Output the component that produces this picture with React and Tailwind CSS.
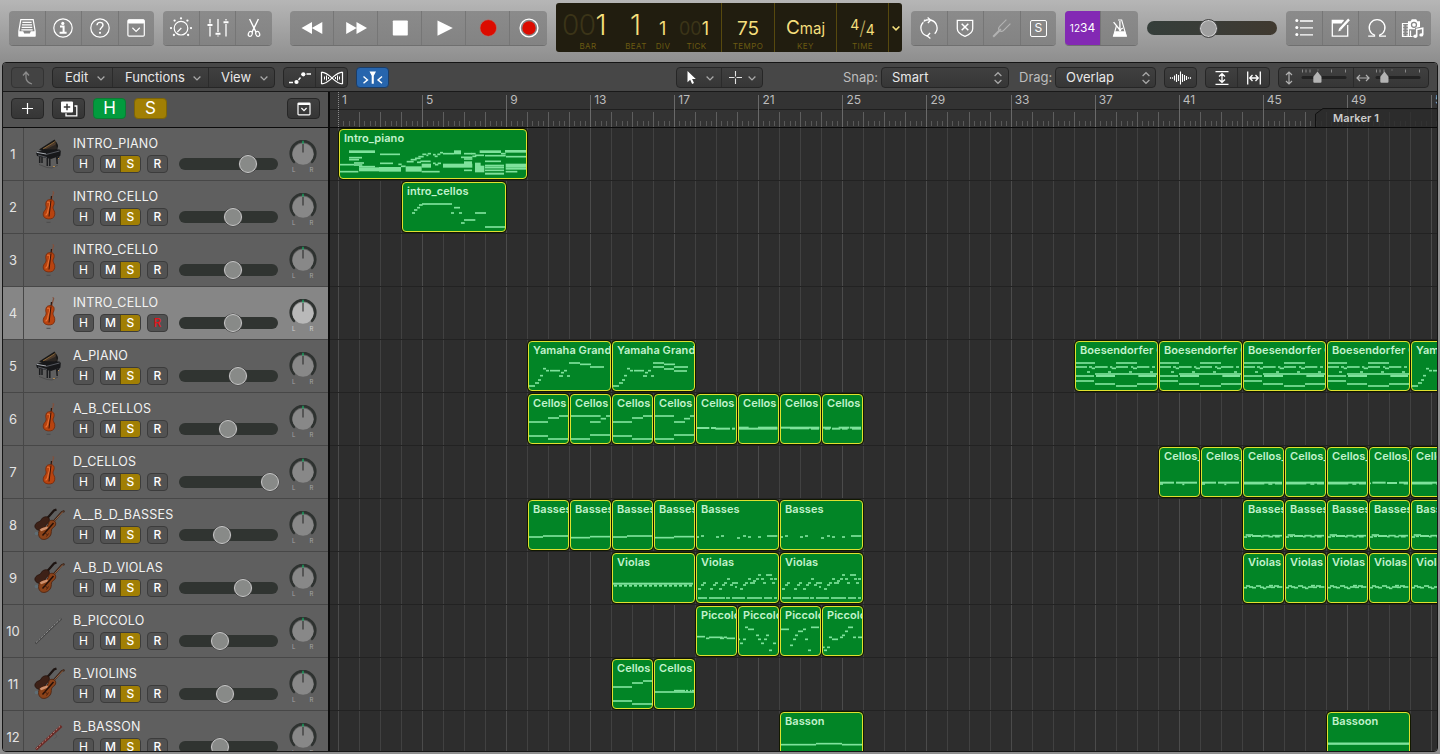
import React from "react";

const BAR = 21.02;
const barX = (b) => Math.round(8.9 + BAR * (b - 1));

/* ---------- note patterns: [x1, x2, y, h?] in thirds of a pixel ---------- */
const INTRO_PIANO = [
  [30, 108, 68, 8], [123, 183, 76], [30, 69, 86], [30, 60, 92], [2, 45, 107], [45, 75, 102], [45, 70, 108], [60, 108, 113],
  [60, 120, 121, 12], [120, 186, 121, 14], [2, 58, 128], [123, 162, 103], [178, 188, 106], [186, 200, 112], [200, 248, 120, 16], [203, 224, 98],
  [215, 233, 92], [228, 245, 88], [238, 254, 83], [250, 262, 76], [262, 268, 79], [266, 276, 74], [282, 290, 77], [287, 296, 82],
  [295, 304, 76], [303, 312, 71], [312, 345, 74], [345, 366, 70, 12], [375, 398, 74], [396, 410, 74], [234, 246, 100], [244, 275, 97],
  [248, 276, 110, 12], [282, 290, 103], [288, 298, 107], [296, 306, 103], [312, 400, 110, 12], [248, 302, 128], [366, 400, 85], [375, 400, 90],
  [375, 399, 104, 14], [375, 399, 124], [400, 412, 82], [408, 435, 79], [422, 486, 68, 8], [438, 500, 80], [408, 425, 106, 10], [408, 436, 120, 20],
  [486, 500, 74], [498, 562, 67, 8], [501, 562, 83], [438, 486, 97], [438, 495, 110, 6], [438, 495, 116], [438, 495, 124], [438, 495, 134, 6],
  [500, 562, 110, 12], [500, 562, 119, 6], [500, 535, 128],
];
const INTRO_CELLOS = [
  [30, 39, 93], [36, 46, 84], [45, 54, 77], [51, 62, 69], [60, 150, 66], [156, 174, 77], [147, 156, 93], [171, 180, 93],
  [219, 252, 93], [186, 220, 114], [177, 188, 123], [249, 309, 135],
];
const YAM_BASE = [
  [2, 21, 135], [21, 33, 126], [30, 39, 117], [36, 45, 104], [45, 54, 83], [54, 63, 89], [66, 96, 89], [99, 108, 95],
  [108, 117, 89], [93, 105, 105], [117, 126, 105], [123, 156, 66], [156, 189, 70], [186, 228, 78],
];
const YAM_2 = [...YAM_BASE, [123, 156, 78], [156, 186, 84], [186, 225, 90]];
const CEL_A = [[2, 60, 84], [60, 93, 72], [93, 122, 66], [2, 60, 126], [60, 122, 135]];
const CEL_B = [[1, 92, 66], [92, 108, 74], [108, 122, 66], [60, 92, 84], [1, 60, 135], [60, 122, 123]];
const CEL_D = [[1, 60, 66], [60, 93, 84], [90, 108, 74], [108, 122, 66], [1, 60, 135], [60, 122, 123]];
const CEL_E = [[2, 40, 102, 6], [45, 60, 102, 6], [58, 102, 104, 6], [108, 117, 104, 6]];
const CEL_F = [[1, 32, 101, 6], [1, 118, 104, 6], [60, 118, 101, 6]];
const CEL_G = [[2, 60, 101, 6], [30, 87, 103, 6], [60, 118, 101, 6], [93, 117, 104, 6]];
const CEL_H = [[1, 27, 101, 6], [8, 24, 104, 6], [30, 55, 104, 6], [50, 82, 101, 6], [60, 77, 104, 6], [84, 117, 101, 6], [90, 117, 104, 6]];
const BAS_A = [[2, 45, 111], [45, 122, 108]];
const BAS_B = [[2, 60, 113], [60, 122, 110]];
const BAS_LONG = [
  [2, 9, 111], [15, 24, 108], [60, 69, 111], [75, 84, 108], [123, 132, 114], [141, 150, 108], [156, 165, 111], [186, 195, 111], [213, 244, 108],
];
const VIO_TREM = [[3, 243, 92, 6], ...Array.from({ length: 16 }, (_, i) => [6 + i * 15, 15 + i * 15, 98, 6])];
const VIO_RUN = [
  [6, 15, 108], [15, 24, 96], [21, 30, 90], [42, 51, 108], [51, 60, 96], [57, 66, 90], [69, 78, 108], [78, 87, 96], [84, 93, 90],
  [93, 102, 78], [102, 111, 96], [108, 126, 90], [117, 123, 102], [132, 141, 108], [141, 150, 96], [147, 156, 90],
  [156, 165, 78], [162, 177, 90], [171, 180, 84], [180, 189, 78], [186, 195, 66], [195, 204, 78], [201, 210, 90], [210, 228, 66],
  [222, 231, 78], [228, 237, 90], [234, 243, 78],
  [6, 33, 135], [39, 87, 135], [90, 102, 135], [108, 147, 135], [153, 198, 135], [204, 228, 135], [234, 243, 135],
];
const PIC_1 = [[2, 27, 92], [30, 40, 97], [39, 80, 94], [72, 84, 97], [83, 93, 94], [92, 117, 97]];
const PIC_2 = [
  [1, 6, 100], [6, 15, 112], [15, 24, 100], [21, 30, 64], [30, 48, 70], [54, 63, 88], [60, 69, 100], [69, 78, 112],
  [78, 87, 100], [84, 93, 88], [93, 102, 133], [105, 114, 112],
];
const PIC_3 = [[2, 27, 70], [30, 39, 118], [39, 48, 100], [45, 54, 88], [54, 69, 76], [69, 78, 70], [75, 84, 100], [84, 93, 133], [93, 117, 64]];
const PIC_4 = [
  [2, 8, 124], [6, 15, 133], [15, 24, 124], [21, 30, 94], [30, 48, 100], [54, 63, 94], [60, 69, 88], [69, 78, 76], [78, 93, 64], [93, 102, 94], [108, 120, 94],
];
const CEL_LOW = [[2, 122, 99], [60, 93, 95], [96, 102, 95], [108, 112, 95], [114, 122, 95]];
const BASSON = [[2, 108, 98], [108, 186, 95], [186, 246, 98]];
const BASSOON_R = [[2, 246, 95, 7]];
const BOES = [
  [3, 60, 66], [3, 36, 78], [42, 51, 78], [50, 60, 82], [60, 98, 78], [105, 112, 78], [110, 123, 82], [123, 186, 66], [123, 159, 78],
  [168, 175, 78], [174, 186, 82], [186, 223, 78], [231, 240, 78], [36, 45, 93], [99, 108, 93], [162, 171, 93], [225, 234, 93],
  [3, 57, 105], [60, 123, 99], [63, 120, 105, 6], [123, 186, 99], [186, 246, 99], [190, 243, 105, 6],
  [3, 57, 120], [60, 120, 129], [123, 186, 135], [186, 246, 129],
];
const CEL_R1 = [[3, 45, 107, 6], [51, 114, 107, 6], [3, 12, 111], [70, 76, 112]];
const CEL_R2 = [[2, 117, 107, 6], [2, 64, 110], [76, 88, 111], [96, 117, 110]];
const CEL_R3 = [[2, 6, 109], [10, 50, 107, 6], [54, 84, 108, 6], [90, 117, 107, 6], [104, 117, 110]];
const BAS_R = [
  [2, 12, 111], [8, 30, 105], [14, 24, 109], [27, 54, 108, 6], [54, 62, 110], [58, 80, 107], [76, 90, 110], [88, 117, 107], [96, 110, 110],
];
const VIO_R = [
  [2, 12, 104], [9, 21, 99], [18, 30, 102], [27, 39, 104], [39, 54, 99], [51, 63, 103], [60, 70, 106], [69, 84, 102], [78, 90, 98],
  [84, 96, 103], [93, 108, 99], [102, 118, 102],
];

const TRACKS = [
  { name: "INTRO_PIANO", icon: "piano", vol: 69, regions: [[1, 9, "Intro_piano", INTRO_PIANO]] },
  { name: "INTRO_CELLO", icon: "cello", vol: 54, regions: [[4, 5, "intro_cellos", INTRO_CELLOS]] },
  { name: "INTRO_CELLO", icon: "cello", vol: 54, regions: [] },
  { name: "INTRO_CELLO", icon: "cello", vol: 54, selected: true, regions: [] },
  {
    name: "A_PIANO", icon: "piano", vol: 59,
    regions: [
      [10, 4, "Yamaha Grand", YAM_BASE], [14, 4, "Yamaha Grand", YAM_2],
      [36, 4, "Boesendorfer G", BOES], [40, 4, "Boesendorfer G", BOES], [44, 4, "Boesendorfer G", BOES],
      [48, 4, "Boesendorfer G", BOES], [52, 4, "Yamaha Grand", YAM_BASE],
    ],
  },
  {
    name: "A_B_CELLOS", icon: "cello", vol: 49,
    regions: [CEL_A, CEL_B, CEL_A, CEL_D, CEL_E, CEL_F, CEL_G, CEL_H].map((n, i) => [10 + i * 2, 2, "Cellos", n]),
  },
  {
    name: "D_CELLOS", icon: "cello", vol: 91,
    regions: [CEL_R1, CEL_R1, CEL_R2, CEL_R2, CEL_R2, CEL_R3, CEL_R2].map((n, i) => [40 + i * 2, 2, "Cellos_", n]),
  },
  {
    name: "A__B_D_BASSES", icon: "violins", vol: 43,
    regions: [
      [10, 2, "Basses", BAS_A], [12, 2, "Basses", BAS_B], [14, 2, "Basses", BAS_A], [16, 2, "Basses", BAS_B],
      [18, 4, "Basses", BAS_LONG], [22, 4, "Basses", BAS_LONG],
      ...[44, 46, 48, 50, 52].map((b) => [b, 2, "Basses", BAS_R]),
    ],
  },
  {
    name: "A_B_D_VIOLAS", icon: "violins", vol: 64,
    regions: [
      [14, 4, "Violas", VIO_TREM], [18, 4, "Violas", VIO_RUN], [22, 4, "Violas", VIO_RUN],
      ...[44, 46, 48, 50, 52].map((b) => [b, 2, "Violas", VIO_R]),
    ],
  },
  { name: "B_PICCOLO", icon: "flute", vol: 41, regions: [PIC_1, PIC_2, PIC_3, PIC_4].map((n, i) => [18 + i * 2, 2, "Piccolo", n]) },
  { name: "B_VIOLINS", icon: "violins", vol: 46, regions: [[14, 2, "Cellos", CEL_A], [16, 2, "Cellos", CEL_LOW]] },
  { name: "B_BASSON", icon: "bassoon", vol: 41, regions: [[22, 4, "Basson", BASSON], [48, 4, "Bassoon", BASSOON_R]] },
];

/* ------------------------------- icons ---------------------------------- */
const Ico = ({ children, w = 24, h = 24, sw = 1.2, color = "#fff" }) => (
  <svg width={w} height={h} viewBox={`0 0 ${w} ${h}`} fill="none" stroke={color} strokeWidth={sw} className="shrink-0">
    {children}
  </svg>
);

const LibraryIcon = () => (
  <Ico>
    <path d="M5.8 3.6h12.4l1.9 11.2v5.1H3.9v-5.1z" />
    <path d="M7.4 6.4h9.2M7 8.9h10M6.7 11.4h10.6M6.3 13.9h11.4" />
    <path d="M3.8 15.2h4.4l1 2.4h5.6l1-2.4h4.4v5.2H3.8z" fill="#fff" stroke="none" />
  </Ico>
);
const InfoIcon = () => (
  <Ico>
    <circle cx="12" cy="12" r="9.2" />
    <circle cx="11.8" cy="7.4" r="1.6" fill="#fff" stroke="none" />
    <path d="M9 10.6h3.6v6M8.6 16.8h7" strokeWidth="2" />
  </Ico>
);
const HelpIcon = () => (
  <Ico>
    <circle cx="12" cy="12" r="9.2" />
    <path d="M9 9.3c.1-1.800 1.300-2.900 3-2.900s3 1.100 3 2.700c0 2.400-2.900 2.300-2.900 4.900" strokeWidth="1.4" />
    <circle cx="12" cy="16.8" r="1.1" fill="#fff" stroke="none" />
  </Ico>
);
const ToolbarBoxIcon = () => (
  <Ico>
    <rect x="3.9" y="3.9" width="16.4" height="16.2" rx="1.2" />
    <rect x="3.9" y="3.6" width="16.4" height="4" fill="#fff" stroke="none" rx="1" />
    <path d="M8.4 11.8l3.7 3.6 3.7-3.6" />
  </Ico>
);
const KnobIcon = () => (
  <Ico>
    <circle cx="12" cy="12.2" r="6.8" />
    <path d="M12.3 12l-4 4.2" />
    {[[12, 2.3], [5.6, 4.6], [18.4, 4.6], [2, 12.1], [22, 12.1], [4.9, 19], [19.1, 19]].map(([x, y]) => (
      <circle key={x + "," + y} cx={x} cy={y} r="1.15" fill="#fff" stroke="none" />
    ))}
  </Ico>
);
const MixerIcon = () => (
  <Ico w={22}>
    <path d="M3 3v4.500M3 10.500v10M11 3v13M11 19.500v1M19 3v1.500M19 8v12.500" strokeWidth="1.300" />
    <path d="M0.500 9h5M8.500 17.700h5M16.500 6.300h5" strokeWidth="2" />
  </Ico>
);
const ScissorsIcon = () => (
  <Ico>
    <path d="M7.600 3l6.500 13.400M16.400 3L9.900 16.400" strokeWidth="1.400" />
    <ellipse cx="8.300" cy="17.900" rx="1.900" ry="2.600" transform="rotate(22 8.300 17.900)" />
    <ellipse cx="15.700" cy="17.900" rx="1.900" ry="2.600" transform="rotate(-22 15.700 17.900)" />
  </Ico>
);
const RewindIcon = () => (
  <Ico><path d="M12 6v12L1.500 12zM22.300 6v12l-10.500-6z" fill="#fff" stroke="none" /></Ico>
);
const ForwardIcon = () => (
  <Ico><path d="M12.500 6v12L23 12zM2.200 6v12l10.500-6z" fill="#fff" stroke="none" /></Ico>
);
const StopIcon = () => (
  <Ico><rect x="4.800" y="4.500" width="15" height="15" rx="0.800" fill="#fff" stroke="none" /></Ico>
);
const PlayIcon = () => (
  <Ico><path d="M5.500 4.500v15.200L20.800 12.100z" fill="#fff" stroke="none" /></Ico>
);
const RecordIcon = () => (
  <Ico><circle cx="12.300" cy="12" r="8.300" fill="#dc0b00" stroke="#b5746f" strokeWidth="0.600" /></Ico>
);
const CaptureIcon = () => (
  <Ico>
    <circle cx="12" cy="12" r="8.900" strokeWidth="1.400" />
    <circle cx="12" cy="12" r="6.700" fill="#dc0b00" stroke="none" />
  </Ico>
);
const CycleIcon = () => (
  <Ico sw={1.3}>
    <path d="M10.500 20A8.200 8.200 0 0 1 6.300 6.200M13.500 4a8.200 8.200 0 0 1 4.200 13.800" />
    <path d="M7.600 3.700l-.2 1.300A8.200 8.200 0 0 1 13.700 4M10.600 1.500l3.100 2.500-2.800 3M13.400 22.500l-3.100-2.500 2.800-3" />
  </Ico>
);
const ReplaceIcon = () => (
  <Ico sw={1.3}>
    <path d="M4.300 4.300h15.400v8.400c0 4-3.500 6-7.700 7.600-4.200-1.600-7.700-3.600-7.700-7.600z" />
    <path d="M8.700 7.700l6.600 6.600M15.300 7.700l-6.600 6.600" strokeWidth="1.500" />
  </Ico>
);
const TunerIcon = () => (
  <Ico color="#b2b2b2">
    <path d="M3.200 20.800l6.300-6.300" strokeWidth="2" />
    <path d="M9.500 14.500c-1.600-1.600-.8-3.200.4-4.400l6.500-6.500M9.500 14.500c1.600 1.600 3.200.8 4.400-.4l6.500-6.500M9.500 14.500l1.500-1.500" />
  </Ico>
);
const SoloIcon = () => (
  <div className="flex h-[17px] w-[17px] items-center justify-center rounded-[2px] border border-white text-[12px] leading-none text-white">S</div>
);
const MetronomeIcon = () => (
  <Ico>
    <path d="M10 4h3.700l4.600 16.300H5.500L8.700 9" strokeWidth="1.100" />
    <path d="M7 15.300h10l1.800 5H5.100z" fill="#fff" stroke="none" />
    <path d="M12.800 15L5.600 6.200M11.900 5v9" strokeWidth="1.300" />
    <path d="M11 14.500l3.800-2.500" />
  </Ico>
);
const ListIcon = () => (
  <Ico>
    {[5, 11.900, 18.800].map((y) => (
      <g key={y}>
        <circle cx="4.800" cy={y - 0.400} r="1.500" fill="#fff" stroke="none" />
        <path d={`M8 ${y}h13`} strokeWidth="1.300" />
      </g>
    ))}
  </Ico>
);
const NotePadIcon = () => (
  <Ico sw={1.3}>
    <path d="M15.500 4.500H4.300v15.700h15.400V9" />
    <path d="M4 4.200h12l-2.500 3.200H4z" fill="#fff" stroke="none" />
    <path d="M12 13.200l9-9.800" strokeWidth="2.400" />
    <path d="M10.300 15.400l.8-3.200 2.200 2z" fill="#fff" stroke="none" />
  </Ico>
);
const LoopIcon = () => (
  <Ico sw={1.3}><path d="M3.200 20.200h6.300v-1.200A7.900 7.900 0 1 1 14.700 19v1.200H21" /></Ico>
);
const MediaIcon = () => (
  <Ico w={26} h={24}>
    <path d="M2.500 7.500h6v13h-6z" strokeWidth="1.200" />
    <path d="M2 10h2.300M2 13h2.300M2 16h2.300M2 19h2.300M6.500 10h2M6.500 13h2M6.500 16h2M6.500 19h2" strokeWidth="1.200" />
    <path d="M8 5.200h2.600l1.200-2h4.400l1.200 2H20v8H8z" fill="#fff" stroke="none" />
    <circle cx="14" cy="8.800" r="2.500" stroke="#878787" strokeWidth="1.300" fill="#fff" />
    <path d="M10.500 14.500v6M8 20.500h4.500" />
    <path d="M16.700 20v-6.700l6-1.300v6.700" stroke="#878787" strokeWidth="3.200" />
    <path d="M16.700 20v-6.500l6-1.300v6.500" strokeWidth="1.600" />
    <ellipse cx="15.300" cy="20.200" rx="2" ry="1.700" fill="#fff" stroke="none" />
    <ellipse cx="21.300" cy="18.900" rx="2" ry="1.700" fill="#fff" stroke="none" />
  </Ico>
);
const Chevron = ({ color = "#a8a8a8", sw = 1.3 }) => (
  <Ico w={10} h={8} color={color} sw={sw}><path d="M1.600 2.500L5 5.900l3.400-3.400" /></Ico>
);
const UpDown = () => (
  <Ico w={10} h={14} color="#a8a8a8" sw={1.2}><path d="M1.600 5L5 1.700 8.400 5M1.600 9L5 12.300 8.400 9" /></Ico>
);

/* --------------------------- instrument art ----------------------------- */
const Cello = () => (
  <svg width="30" height="36" viewBox="0 0 30 36">
    <path d="M18.500 3.200c1-1 1.600.5.800 1.300L17.300 12" fill="none" stroke="#83503c" strokeWidth="1.200" />
    <path d="M17.500 7l-1.700 14" stroke="#29160f" strokeWidth="1.200" />
    <path d="M14.800 10.800c3.200-.7 5.700.4 5.300 3.900-.2 2.200-1.500 2.700-1 4.600.4 2.100 2.100 3 1.600 6.500-.5 3.300-3.200 4.400-6.400 4.100-3.200-.4-5.400-1.800-5-5.400.3-2.700 2.500-3.400 2.800-5.600.2-1.700-.7-2.500-.3-4.600.4-2.200 1.300-3.200 3-3.500z" fill="#b8430f" stroke="#74280a" strokeWidth="0.800" />
    <path d="M13.200 13.600c1.500-1.100 2.700-.6 2.500 1.600-.1 2.300-1.300 3.500-1.700 6.500-.3 2.300-1.500 4.200-2.500 4.400" fill="none" stroke="#e57034" strokeWidth="1.200" />
    <path d="M17 11.500l-2 16" stroke="#3b1508" strokeWidth="1" />
    <path d="M12.500 33.300h4" stroke="#4c4c4c" strokeWidth="1" />
  </svg>
);
const Piano = () => (
  <svg width="30" height="36" viewBox="0 0 30 36">
    <path d="M5 13.500L20.500 3.400c1.600 2.600 3.400 3.700 3.600 6.600l-1 4.600-12 1z" fill="#191817" />
    <path d="M9 12.500L19 7l3-.8-.9 7-5 1.200z" fill="#4b3a2c" />
    <path d="M9 13L21.500 5.300" stroke="#a0763f" strokeWidth="0.800" />
    <path d="M9 14.500L22 8.500l1 4.500-7 2z" fill="#2b2622" />
    <path d="M2 16.200l8.500-3 15 .2 1.300 1.700-.4 4.600-9.400 3.300L3 20z" fill="#17181a" />
    <path d="M2.500 16.300l9.500 1.700" stroke="#a9adb3" strokeWidth="1" />
    <path d="M4 19l9 2.500M12 18.500l13.500-3.500" stroke="#5c6066" strokeWidth="0.900" />
    <path d="M5.700 20.500v6.500M8 21v6M13.300 22v8M15.800 22v8M22.600 20.500l.6 7.500M25 20l-1.500 3" stroke="#1b1c1e" strokeWidth="1.500" />
    <path d="M5 28.500l8 3 5 .5 6-3" fill="none" stroke="#4c4c4c" strokeWidth="1" />
    <path d="M19 30.500h2M24.500 22v1" stroke="#b58a4c" strokeWidth="1" />
  </svg>
);
const Violins = () => (
  <svg width="36" height="36" viewBox="0 0 36 36">
    <path d="M25.500 2.500l-2.500 1L13 15" fill="none" stroke="#1d1411" strokeWidth="2.200" />
    <path d="M13.500 10c3-1 5.500 1 4.800 3.800-.7 2.500-3 3-3.800 5-1 2.500-3.700 5.200-6.500 4.500C4.500 22.500 2.500 19.500 5 16.500c1.800-2 4-1.500 5-3.400.7-1.500 1.500-2.500 3.500-3.100z" fill="#3d2117" stroke="#26130d" strokeWidth="0.800" />
    <path d="M33.500 4l-2.700 1.200L19 18.500" fill="none" stroke="#3c2418" strokeWidth="2" />
    <path d="M32 4.500L21 16.500" stroke="#a87350" strokeWidth="0.800" />
    <path d="M19.500 13.500c3.500-1 6 1.500 5 4.500-.8 2.500-3.500 2.500-4 4.800-.5 2.200.3 4.500-2 7-2.400 2.500-6.500 3.700-9 1.500-2.300-2-2.600-6-.5-8.700 2-2.500 5.500-1.800 7.300-3.600 1.500-1.500 1-4.800 3.200-5.500z" fill="#8a4219" stroke="#4b1f0b" strokeWidth="0.800" />
    <path d="M9.500 23.500c1.700-2 5-1.500 7-3.300" fill="none" stroke="#cf8f6b" strokeWidth="2.400" />
    <path d="M22.500 16L11.500 28.500" stroke="#241009" strokeWidth="1.500" />
    <path d="M13 25l3 2.500M15.500 29.500l2-3" stroke="#4b1f0b" strokeWidth="1" />
    <circle cx="5.500" cy="26.500" r="1.800" fill="#5d7885" opacity="0.600" />
  </svg>
);
const Flute = () => (
  <svg width="30" height="36" viewBox="0 0 30 36">
    <path d="M1.500 30.500L27.500 5.500" stroke="#444444" strokeWidth="1.800" />
    <path d="M2 29.500L27 5.500" stroke="#a3a3a3" strokeWidth="0.900" strokeDasharray="2.500 1" />
  </svg>
);
const Bassoon = () => (
  <svg width="30" height="36" viewBox="0 0 30 36">
    <path d="M2 30.500L27.500 7" stroke="#6b2a25" strokeWidth="2.400" />
    <path d="M2.500 29.500L27 6.500" stroke="#c08f88" strokeWidth="1" strokeDasharray="2 1.800" />
    <path d="M20 13l3 4.500-2.500 2" fill="none" stroke="#505050" strokeWidth="0.600" />
  </svg>
);
const ART = { cello: Cello, piano: Piano, violins: Violins, flute: Flute, bassoon: Bassoon };

/* ----------------------------- top toolbar ------------------------------ */
const Group = ({ children, className = "" }) => (
  <div className={`flex h-[34px] shrink-0 divide-x divide-[#767676] overflow-hidden rounded-[4px] bg-linear-to-b from-[#8b8b8b] to-[#838383] shadow-[0_1px_0_#6f6f6f] ${className}`}>
    {children}
  </div>
);
const Cell = ({ children, className = "flex-1" }) => (
  <div className={`flex items-center justify-center ${className}`}>{children}</div>
);
const LcdCell = ({ label, w, children }) => (
  <div className={`flex h-full flex-col items-center border-l border-[#57490e] ${w}`}>
    <div className="flex h-[35px] items-end text-[#f5df7c]">{children}</div>
    <div className="mt-[4px] text-[8px] leading-[9px] tracking-[0.4px] text-[#6b5a12]">{label}</div>
  </div>
);
const Lcd = () => (
  <div className="flex h-[49px] w-[346px] shrink-0 overflow-hidden rounded-[3px] bg-[#211d0f]">
    <div className="flex w-[165px] flex-col">
      <div className="flex h-[35px] items-baseline pt-[8px] text-[#f5df7c]">
        <div className="w-[68px] pl-[6px] text-[28px] leading-[28px] font-light tracking-[-0.5px]"><span className="text-[#3b3418]">00</span>1</div>
        <div className="w-[26px] pl-[6px] text-[28px] leading-[28px] font-light">1</div>
        <div className="w-[29px] pl-[9px] text-[18px] leading-[18px]">1</div>
        <div className="text-[18px] leading-[18px]"><span className="text-[#3b3418]">00</span>1</div>
      </div>
      <div className="mt-[4px] flex text-center text-[8px] leading-[9px] tracking-[0.4px] text-[#6b5a12]">
        <div className="w-[64px]">BAR</div>
        <div className="w-[32px]">BEAT</div>
        <div className="w-[22px]">DIV</div>
        <div className="w-[45px]">TICK</div>
      </div>
    </div>
    <LcdCell label="TEMPO" w="w-[53px]"><span className="text-[19px] leading-[19px]">75</span></LcdCell>
    <LcdCell label="KEY" w="w-[62px]"><span className="text-[19px] leading-[19px]">C<span className="text-[15px]">maj</span></span></LcdCell>
    <LcdCell label="TIME" w="w-[52px]">
      <span className="flex items-end text-[14px] leading-[14px]">
        <span className="pb-[6px]">4</span>
        <span className="text-[19px] leading-[19px] font-light text-[#b5a45c]">/</span>
        <span className="pb-[1px]">4</span>
      </span>
    </LcdCell>
    <div className="flex h-full flex-1 items-center justify-center border-l border-[#57490e]"><Chevron color="#f5df7c" sw={1.6} /></div>
  </div>
);

const TopBar = () => (
  <div className="flex h-[62px] shrink-0 items-start pl-[9px]">
    <Group className="mt-[11px] w-[145px]">
      <Cell><LibraryIcon /></Cell><Cell><InfoIcon /></Cell><Cell><HelpIcon /></Cell><Cell><ToolbarBoxIcon /></Cell>
    </Group>
    <Group className="mt-[11px] ml-[9px] w-[109px]">
      <Cell><KnobIcon /></Cell><Cell><MixerIcon /></Cell><Cell><ScissorsIcon /></Cell>
    </Group>
    <Group className="mt-[11px] ml-[18px] w-[257px]">
      <Cell className="w-[44px]"><RewindIcon /></Cell>
      <Cell className="w-[44px]"><ForwardIcon /></Cell>
      <Cell className="w-[44px]"><StopIcon /></Cell>
      <Cell className="w-[44px]"><PlayIcon /></Cell>
      <Cell className="w-[44px]"><RecordIcon /></Cell>
      <Cell><CaptureIcon /></Cell>
    </Group>
    <div className="mt-[3px] ml-[9px]"><Lcd /></div>
    <Group className="mt-[11px] ml-[9px] w-[145px]">
      <Cell><CycleIcon /></Cell><Cell><ReplaceIcon /></Cell><Cell><TunerIcon /></Cell><Cell><SoloIcon /></Cell>
    </Group>
    <Group className="mt-[11px] ml-[9px] w-[73px]">
      <div className="flex w-[36px] items-center justify-center bg-[#8329b4] text-white">
        <span className="flex items-baseline leading-none"><span className="text-[10px]">12</span><span className="text-[12px]">34</span></span>
      </div>
      <Cell><MetronomeIcon /></Cell>
    </Group>
    <div className="mt-[21px] ml-[9px] flex h-[14px] w-[130px] items-center rounded-full bg-linear-to-r from-[#353e3a] via-[#3a3c37] to-[#40392f] pl-[52px]">
      <div className="h-[19px] w-[19px] shrink-0 rounded-full border border-[#444] bg-[#a0a0a0] shadow-[inset_0_0_0_1px_#cfcfcf]" />
    </div>
    <Group className="mt-[11px] ml-[9px] w-[145px]">
      <Cell><ListIcon /></Cell><Cell><NotePadIcon /></Cell><Cell><LoopIcon /></Cell><Cell><MediaIcon /></Cell>
    </Group>
  </div>
);

/* ------------------------------ menu bar -------------------------------- */
const BTN = "flex h-[21px] shrink-0 items-stretch overflow-hidden rounded-[4px] border border-[#262626] bg-linear-to-b from-[#404040] to-[#363636]";
const Menu = ({ label, w }) => (
  <div className={`flex items-center justify-between pl-[12px] ${w}`}><span>{label}</span><Chevron /></div>
);
const ZoomSlider = ({ pos }) => (
  <svg width="46" height="19" viewBox="0 0 46 19">
    <path d="M1.500 1.500v3M5 1.500v3M9 1.500v3M17 1.500v1M30.500 1.500v3M44.500 1.500v3" stroke="#888" />
    <path d="M2 9.500h42" stroke="#222" strokeWidth="3" strokeLinecap="round" />
    <path d={`M${pos} 3.500l4 5.200v5a1 1 0 0 1-1 1h-6.200a1 1 0 0 1-1-1v-5z`} fill="#b4b4b4" />
  </svg>
);

const MenuBar = () => (
  <div className="flex h-[29px] shrink-0 items-start border-b border-[#191919] bg-[#474747] pt-[4px] pl-[8px] text-[13px] text-[#e8e8e8]">
    <div className="flex h-[21px] w-[33px] items-center justify-center rounded-[4px] border border-[#333] bg-[#434343]">
      <Ico w={16} h={16} color="#8b8b8b" sw={1.300}><path d="M3 5.500L6 2l3 3.500M6 2.300v5c0 4 2.500 5.700 6 6.700" /></Ico>
    </div>
    <div className={`${BTN} ml-[8px] w-[223px] divide-x divide-[#2b2b2b]`}>
      <Menu label="Edit" w="w-[60px] pr-[6px]" /><Menu label="Functions" w="w-[96px] pr-[6px]" /><Menu label="View" w="flex-1 pr-[5px]" />
    </div>
    <div className={`${BTN} ml-[8px] w-[65px] divide-x divide-[#2b2b2b]`}>
      <Cell>
        <Ico w={24} h={18} sw={1.300}>
          <path d="M1 13.500h4M18.500 5h4.500M10.500 11l2-2.500" />
          <circle cx="8.500" cy="13" r="2.100" fill="#fff" stroke="none" /><circle cx="15.300" cy="5.300" r="2.100" fill="#fff" stroke="none" />
        </Ico>
      </Cell>
      <Cell>
        <Ico w={24} h={18} sw={1.200}>
          <path d="M1.500 3v12M22.500 3v12M1.500 3.200c5 .3 8 3.500 10.500 5.800s5.500 5.500 10.500 5.800M1.500 14.800c5-.3 8-3.500 10.500-5.800s5.500-5.500 10.500-5.800" />
          <path d="M4.500 7.500v3M6.500 6.500v5M8.500 8v2M15.500 8v2M17.500 6.500v5M19.500 7.500v3" strokeWidth="1" />
        </Ico>
      </Cell>
    </div>
    <div className="ml-[8px] flex h-[21px] w-[33px] items-center justify-center rounded-[4px] border border-[#1c3d66] bg-[#2765ad]">
      <Ico w={24} h={18} sw={1.400}>
        <path d="M2.500 7.500l4 3.400-4 3.400M21 7.500l-4 3.400 4 3.400" />
        <path d="M8.500 2.500h6.500l-2.200 4.200v8h-2.100v-8z" fill="#fff" stroke="none" />
      </Ico>
    </div>
    <div className={`${BTN} ml-[287px] w-[87px] divide-x divide-[#2b2b2b]`}>
      <div className="flex flex-1 items-center justify-between pr-[6px] pl-[9px]">
        <Ico w={12} h={15}><path d="M1.500 1v11.300l2.700-2.500 1.900 4.100 1.900-.9-1.900-4h3.700z" fill="#fff" stroke="none" /></Ico>
        <Chevron />
      </div>
      <div className="flex flex-1 items-center justify-between pr-[5px] pl-[7px]">
        <Ico w={14} h={14} sw={1.100} color="#e4e4e4"><path d="M6.500 0v5.500M6.500 7.500V13M0 6.500h5.500M7.500 6.500H13" /></Ico>
        <Chevron />
      </div>
    </div>
    <div className="ml-[80px] w-[38px] leading-[21px] text-[#bdbdbd]">Snap:</div>
    <div className={`${BTN} w-[128px]`}>
      <div className="flex flex-1 items-center justify-between pr-[5px] pl-[10px]"><span>Smart</span><UpDown /></div>
    </div>
    <div className="ml-[10px] w-[36px] leading-[21px] text-[#bdbdbd]">Drag:</div>
    <div className={`${BTN} w-[101px]`}>
      <div className="flex flex-1 items-center justify-between pr-[4px] pl-[10px]"><span>Overlap</span><UpDown /></div>
    </div>
    <div className={`${BTN} ml-[8px] w-[33px]`}>
      <Cell>
        <Ico w={23} h={16} sw={1.100}>
          <path d="M1.500 7.200v1.600M3.500 7.200v1.600M5.500 5.500v5M7.500 4v8M9.500 5v6M11.500 1.500v13M13.500 4v8M15.500 5v6M17.500 6v4M19.500 7.200v1.600M21.500 7.200v1.600" />
        </Ico>
      </Cell>
    </div>
    <div className={`${BTN} ml-[8px] w-[65px] divide-x divide-[#2b2b2b]`}>
      <Cell><Ico w={16} h={16} sw={1.300}><path d="M1.500 1.700h13M1.500 14.300h13M8 4v8M5 6.500L8 3.700l3 2.800M5 9.500l3 2.800 3-2.800" /></Ico></Cell>
      <Cell><Ico w={16} h={16} sw={1.300}><path d="M1.700 1.500v13M14.300 1.500v13M4 8h8M6.500 5L3.700 8l2.800 3M9.500 5l2.800 3-2.800 3" /></Ico></Cell>
    </div>
    <div className={`${BTN} ml-[8px] w-[151px] divide-x divide-[#2b2b2b]`}>
      <div className="flex w-[75px] items-center gap-[6px] pl-[4px]">
        <Ico w={12} h={14} color="#b0b0b0" sw={1.200}><path d="M6 1v12M3 4l3-3 3 3M3 10l3 3 3-3" /></Ico>
        <ZoomSlider pos={16.500} />
      </div>
      <div className="flex flex-1 items-center gap-[5px] pl-[2px]">
        <Ico w={14} h={12} color="#b0b0b0" sw={1.200}><path d="M1 6h12M4 3L1 6l3 3M10 3l3 3-3 3" /></Ico>
        <ZoomSlider pos={9.500} />
      </div>
    </div>
  </div>
);

/* ---------------------------- track headers ----------------------------- */
const HeaderTools = () => (
  <div className="flex h-[36px] w-[327px] shrink-0 items-start border-r-2 border-b border-[#0c0c0c] bg-[#535353] pt-[6px] pl-[8px]">
    <div className={`${BTN} w-[33px]`}><Cell><Ico w={13} h={13} sw={1.200}><path d="M6.500 1v11M1 6.500h11" /></Ico></Cell></div>
    <div className={`${BTN} ml-[8px] w-[33px]`}>
      <Cell>
        <Ico w={18} h={16} sw={1.300}>
          <path d="M14.500 5h2.300v9.800H6v-2.500" />
          <rect x="1" y="0.500" width="12" height="11" rx="1" fill="#fff" stroke="none" />
          <path d="M7 2.800v6.400M3.800 6h6.400" stroke="#3b3b3b" strokeWidth="1.500" />
        </Ico>
      </Cell>
    </div>
    <div className="ml-[8px] flex h-[21px] w-[33px] items-center justify-center rounded-[4px] border border-[#0c7a33] bg-[#029b3e] text-[17px] leading-none text-white">H</div>
    <div className="ml-[8px] flex h-[21px] w-[33px] items-center justify-center rounded-[4px] border border-[#7c6409] bg-[#a17f04] text-[17px] leading-none text-white">S</div>
    <div className={`${BTN} ml-[120px] w-[33px]`}>
      <Cell>
        <Ico w={14} h={14} sw={1.200}>
          <rect x="1" y="1" width="12" height="11.800" rx="0.800" /><path d="M1 2h12" strokeWidth="2" /><path d="M4.400 6l2.600 2.700L9.600 6" />
        </Ico>
      </Cell>
    </div>
  </div>
);

const SmallBtn = "flex h-[18px] items-center justify-center overflow-hidden rounded-[4px] border border-[#3c3c3c] bg-[#525252] text-[12px] leading-none text-white";

const PanKnob = ({ selected }) => (
  <svg width="30" height="34" viewBox="0 0 30 34" className="ml-[9.5px]">
    <path d="M7 22.500A12.200 12.200 0 1 1 23 22.500" fill="none" stroke="#2e3230" strokeWidth="2.800" />
    <circle cx="15" cy="14.200" r="10.600" fill={selected ? "#b9b9b9" : "#888888"} />
    <path d="M15 4v8.500" stroke="#222" />
    <path d="M15 0.800v3" stroke="#12b465" strokeWidth="1.200" />
    <text x="5.800" y="31.500" fontSize="6" fill={selected ? "#d0d0d0" : "#a5a5a5"} textAnchor="middle">L</text>
    <text x="23.500" y="31.500" fontSize="6" fill={selected ? "#d0d0d0" : "#a5a5a5"} textAnchor="middle">R</text>
  </svg>
);

const TrackHeader = ({ track, index }) => {
  const Art = ART[track.icon];
  return (
    <div className={`flex h-[53px] shrink-0 border-b border-[#474747] ${track.selected ? "bg-[#868686]" : "bg-[#5f5f5f]"}`}>
      <div className="flex w-[21px] shrink-0 items-center justify-center border-r border-[#474747] pt-[2px] text-[13px] text-[#e4e4e4]">{index + 1}</div>
      <div className="flex w-[49px] shrink-0 items-start justify-center pt-[8px]"><Art /></div>
      <div className="flex w-[95px] shrink-0 flex-col">
        <div className="mt-[7px] h-[17px] text-[12.5px] leading-[17px] tracking-[0.2px] whitespace-nowrap text-[#f2f2f2]">{track.name}</div>
        <div className="mt-[3px] flex">
          <div className={`${SmallBtn} w-[21px]`}>H</div>
          <div className={`${SmallBtn} ml-[6px] w-[41px] font-medium`}>
            <span className="flex h-full flex-1 items-center justify-center">M</span>
            <span className="flex h-full w-[20px] items-center justify-center border-l border-[#5c4c0c] bg-[#a17f04]">S</span>
          </div>
          <div className={`${SmallBtn} ml-[6px] w-[21px] font-medium`}><span className={track.selected ? "text-[#e0151b]" : ""}>R</span></div>
        </div>
      </div>
      <div className="mt-[30px] ml-[11px] flex h-[12px] w-[99px] shrink-0 items-center rounded-full bg-[#303431]">
        <div
          className="h-[18px] w-[18px] shrink-0 rounded-full border border-[#c8c8c8] bg-[#888a88] shadow-[0_0_0_0.5px_#444]"
          style={{ marginLeft: track.vol - 9 }}
        />
      </div>
      <div className="pt-[12px]"><PanKnob selected={track.selected} /></div>
    </div>
  );
};

/* ------------------------------ timeline -------------------------------- */
const Ruler = () => {
  const bars = Array.from({ length: 53 }, (_, i) => i + 1);
  return (
    <div className="relative h-[36px] flex-1 overflow-hidden border-b border-[#0a0a0a] bg-[#333333]">
      <svg className="absolute inset-0" width="1108" height="36" viewBox="0 0 1108 36">
        <path d="M0 17.500h1108" stroke="#1f1f1f" />
        {bars.map((b) => {
          const x = barX(b) - 0.500;
          const major = b % 4 === 1;
          return (
            <g key={b}>
              {b === 1 ? (
                <path d={`M${x} 0v35`} stroke="#8a8a8a" strokeDasharray="1 1" />
              ) : (
                <path d={`M${x} ${major ? 3 : 20}V35`} stroke={major ? "#696969" : "#5e5e5e"} />
              )}
              {[1, 2, 3].map((q) => (
                <path key={q} d={`M${Math.floor(x + q * 5.250) + 0.500} 29v5`} stroke="#585858" />
              ))}
            </g>
          );
        })}
      </svg>
      <div className="relative flex pl-[12px]">
        {bars.filter((b) => b % 4 === 1).map((b) => (
          <div key={b} className="w-[84.08px] shrink-0 text-[12px] leading-[15px] text-[#bcbcbc]">{b}</div>
        ))}
      </div>
      <svg className="absolute top-[16px] left-[985px]" width="123" height="20" viewBox="0 0 123 20">
        <path d="M0.500 20V6L8 0.500H123V20z" fill="#2b2b2b" fillOpacity="0.850" stroke="#111" />
      </svg>
      <div className="absolute top-[19px] left-[1003px] text-[11px] leading-[14px] font-semibold tracking-[0.1px] text-[#cdcdcd]">Marker 1</div>
    </div>
  );
};

const Region = ({ start, bars, name, notes }) => {
  const left = barX(start);
  const width = barX(start + bars) - left - 1;
  return (
    <div
      className="absolute top-px h-[50px] overflow-hidden rounded-[4px] border border-[#dfe12f] bg-[#028526] shadow-[0_0_0_1px_#111800]"
      style={{ left, width }}
    >
      <svg className="absolute -top-px -left-px" width={width} height="50" viewBox={`0 0 ${width * 3} 150`}>
        {notes.map(([x1, x2, y, h = 5], i) => (
          <rect key={i} x={x1} y={y - h / 2} width={x2 - x1} height={h} fill="#7fe29c" />
        ))}
      </svg>
      <div className="pt-[1px] pl-[4px] text-[11px] leading-[15px] font-semibold tracking-[0.06px] whitespace-nowrap text-[#c3f2cc]">{name}</div>
    </div>
  );
};

const Arrange = () => (
  <div className="relative flex flex-1 flex-col overflow-hidden bg-[#2d2d2d]">
    <svg className="absolute inset-0" width="1108" height="623" viewBox="0 0 1108 623">
      {Array.from({ length: 53 }, (_, i) => (
        <path key={i} d={`M${barX(i + 1) - 0.500} 0V623`} stroke={i % 4 === 0 ? "#4b4b4b" : "#414141"} />
      ))}
    </svg>
    {TRACKS.map((t, i) => (
      <div key={i} className="relative h-[53px] shrink-0">
        <div className="absolute inset-x-0 bottom-0 h-px bg-[#222222]" />
        {t.regions.map(([start, bars, name, notes], j) => (
          <Region key={j} start={start} bars={bars} name={name} notes={notes} />
        ))}
      </div>
    ))}
  </div>
);

export default function App() {
  return (
    <div className="flex h-[754px] w-[1440px] flex-col overflow-hidden bg-[#8e8e8e] bg-[linear-gradient(to_bottom,#b6b6b6_0px,#8e8e8e_62px)] font-['Inter',sans-serif]">
      <TopBar />
      <div className="ml-[2px] flex h-[690px] w-[1436px] flex-col overflow-hidden rounded-[4px] border border-[#151515]">
        <MenuBar />
        <div className="flex shrink-0">
          <HeaderTools />
          <Ruler />
        </div>
        <div className="flex min-h-0 flex-1 overflow-hidden">
          <div className="flex w-[327px] shrink-0 flex-col overflow-hidden border-r-2 border-[#0c0c0c] bg-[#5f5f5f]">
            {TRACKS.map((t, i) => (
              <TrackHeader key={i} track={t} index={i} />
            ))}
          </div>
          <Arrange />
        </div>
      </div>
    </div>
  );
}
